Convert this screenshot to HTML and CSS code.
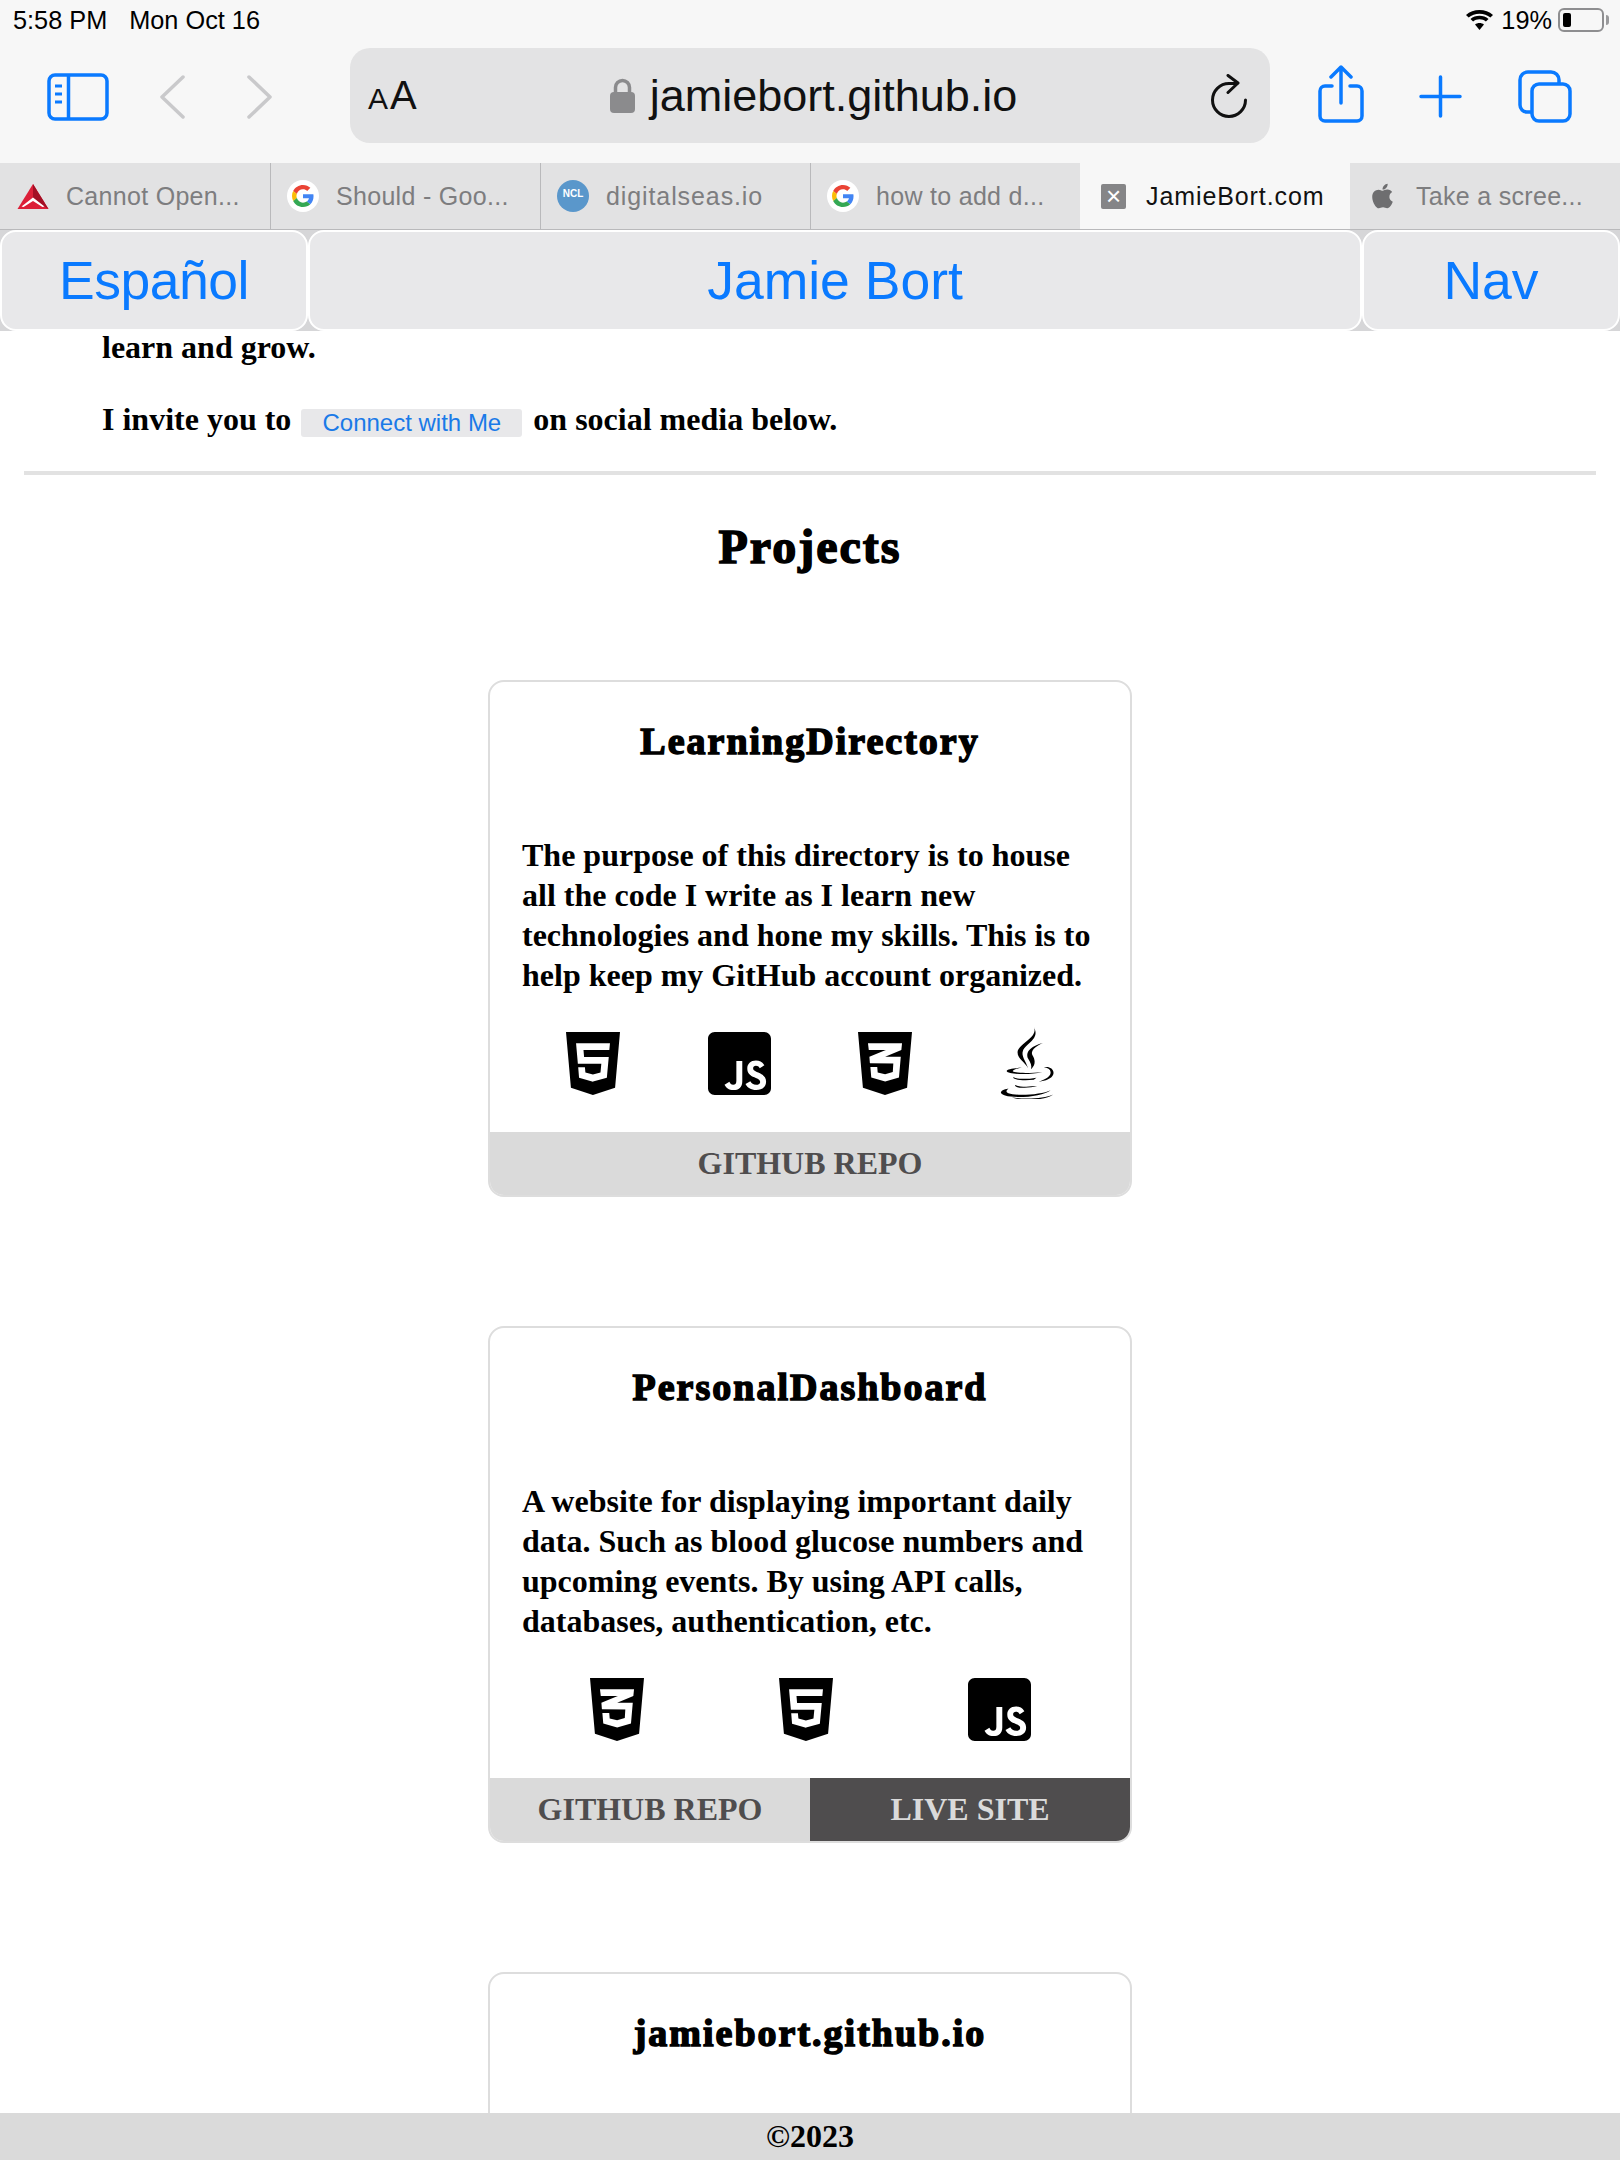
FILE: index.html
```html
<!DOCTYPE html>
<html lang="en">
<head>
    <meta charset="UTF-8">
    <title>JamieBort.com</title>
    <link rel="stylesheet" href="styles.css">
</head>
<body>
    <svg class="icon-defs" width="0" height="0" aria-hidden="true">
        <defs>
            <symbol id="i-html" viewBox="0 32 384 448"><path fill-rule="evenodd" d="M0 32l34.9 395.8L191.5 480l157.6-52.2L384 32H0zm308.2 127.9H124.4l4.1 49.4h175.6l-13.6 148.4-97.9 27v.3h-1.1l-98.7-27.3-6-75.8h47.7L138 320l53.5 14.5 53.7-14.5 6-62.2H84.3L71.5 112.2h241.1l-4.4 47.7z"/></symbol>
            <symbol id="i-css" viewBox="0 32 384 448"><path fill-rule="evenodd" d="M0 32l34.9 395.8L192 480l157.1-52.2L384 32H0zm313.1 80l-4.8 47.3L193 208.6l-.3.1h111.5l-12.8 146.6-98.2 28.7-98.8-29.2-6.4-73.9h48.9l3.2 38.3 52.6 13.3 54.7-15.4 3.7-61.6-166.3-.5v-.1l-.2.1-3.6-46.3L193.1 162l6.5-2.7H76.7L70.9 112h242.2z"/></symbol>
            <symbol id="i-js" viewBox="0 32 448 448"><path fill-rule="evenodd" d="M400 32H48C21.5 32 0 53.5 0 80v352c0 26.5 21.5 48 48 48h352c26.5 0 48-21.5 48-48V80c0-26.5-21.5-48-48-48zM243.8 381.4c0 43.6-25.6 63.5-62.9 63.5-33.7 0-53.2-17.4-63.2-38.5l34.3-20.7c6.6 11.7 12.6 21.6 27.1 21.6 13.8 0 22.6-5.4 22.6-26.5V237.7h42.1v143.7zm99.6 63.5c-39.1 0-64.4-18.6-76.7-43l34.3-19.8c9 14.7 20.8 25.6 41.5 25.6 17.4 0 28.6-8.7 28.6-20.8 0-14.4-11.4-19.5-30.7-28l-10.5-4.5c-30.4-12.9-50.5-29.2-50.5-63.5 0-31.6 24.1-55.6 61.6-55.6 26.8 0 46 9.3 59.8 33.7L368 290c-7.2-12.9-15-18-27.1-18-12.3 0-20.1 7.8-20.1 18 0 12.6 7.8 17.7 25.9 25.6l10.5 4.5c35.8 15.3 55.9 31 55.9 66.2 0 37.8-29.8 58.6-69.7 58.6z"/></symbol>
            <symbol id="i-google" viewBox="0 0 48 48">
                <path fill="#EA4335" d="M24 9.5c3.54 0 6.71 1.22 9.21 3.6l6.85-6.85C35.9 2.38 30.47 0 24 0 14.62 0 6.51 5.38 2.56 13.22l7.98 6.19C12.43 13.72 17.74 9.5 24 9.5z"/>
                <path fill="#4285F4" d="M46.98 24.55c0-1.57-.15-3.09-.38-4.55H24v9.02h12.94c-.58 2.96-2.26 5.48-4.78 7.18l7.73 6c4.51-4.18 7.09-10.36 7.09-17.65z"/>
                <path fill="#FBBC05" d="M10.53 28.59c-.48-1.45-.76-2.99-.76-4.59s.27-3.14.76-4.59l-7.98-6.19C.92 16.46 0 20.12 0 24c0 3.88.92 7.54 2.56 10.78l7.97-6.19z"/>
                <path fill="#34A853" d="M24 48c6.48 0 11.93-2.13 15.89-5.81l-7.73-6c-2.15 1.45-4.92 2.3-8.16 2.3-6.26 0-11.57-4.22-13.47-9.91l-7.98 6.19C6.51 42.62 14.62 48 24 48z"/>
            </symbol>
        </defs>
    </svg>

    <header class="browser">
        <div class="status-bar">
            <div class="status-left">
                <span>5:58 PM</span>
                <span>Mon Oct 16</span>
            </div>
            <div class="status-right">
                <svg class="wifi" viewBox="2.300 .7 22.400 18.800" preserveAspectRatio="none"><path d="M13.5 4.2c3.4 0 6.6 1.3 9 3.6l2.2-2.5C21.700 2.400 17.700.7 13.500.7S5.300 2.400 2.300 5.300l2.200 2.500c2.400-2.300 5.600-3.600 9-3.600z"/><path d="M13.500 9.500c2 0 3.900.8 5.300 2.100l2.200-2.500c-2-1.900-4.700-3-7.500-3s-5.500 1.100-7.500 3l2.200 2.500c1.400-1.300 3.300-2.100 5.300-2.100z"/><path d="M13.500 19.500l3.700-5.100c-1-.9-2.300-1.400-3.700-1.400s-2.700.5-3.700 1.400z"/></svg>
                <span class="battery-text">19%</span>
                <div class="battery"><div class="battery-level"></div></div>
            </div>
        </div>

        <div class="toolbar">
            <svg class="sidebar-icon" viewBox="0 0 62 48" fill="none" stroke="#0a7aff" stroke-width="3.5"><rect x="2" y="2" width="58" height="44" rx="6"/><path d="M21.500 2v44"/><path d="M8 13h7M8 21h7M8 29h7" stroke-width="3"/></svg>
            <svg class="chevron chevron-back" viewBox="0 0 25 44" fill="none" stroke="#c9c9cb" stroke-width="3.500" stroke-linecap="round" stroke-linejoin="round"><path d="M23 2L2 22l21 20"/></svg>
            <svg class="chevron chevron-forward" viewBox="0 0 25 44" fill="none" stroke="#c9c9cb" stroke-width="3.500" stroke-linecap="round" stroke-linejoin="round"><path d="M2 2l21 20L2 42"/></svg>

            <div class="address-bar">
                <span class="reader"><span class="reader-small">A</span>A</span>
                <div class="address">
                    <svg class="lock" viewBox="0 0 25 35"><path fill="none" stroke="#8b8b8d" stroke-width="3.500" d="M5.500 16V9.500a7 7 0 0 1 14 0V16"/><rect x="0" y="14" width="25" height="21" rx="4" fill="#8b8b8d"/></svg>
                    <span>jamiebort.github.io</span>
                </div>
                <svg class="reload" viewBox="0 0 37 44" fill="none" stroke="#111" stroke-width="3" stroke-linecap="round" stroke-linejoin="round"><path d="M35.500 26A16.500 16.500 0 1 1 19 9.500h8"/><path d="M18 1.500L28 9l-10 9.500"/></svg>
            </div>

            <div class="toolbar-actions">
                <svg class="share" viewBox="0 0 46 58" fill="none" stroke="#0a7aff" stroke-width="3.500" stroke-linecap="round" stroke-linejoin="round"><path d="M14 21H7a5 5 0 0 0-5 5v25a5 5 0 0 0 5 5h32a5 5 0 0 0 5-5V26a5 5 0 0 0-5-5h-7"/><path d="M23 38V3M13 12l10-10 10 10"/></svg>
                <svg class="plus" viewBox="0 0 43 43" fill="none" stroke="#0a7aff" stroke-width="3.500" stroke-linecap="round"><path d="M21.500 2v39M2 21.500h39"/></svg>
                <svg class="tabs-icon" viewBox="0 0 54 53" fill="none" stroke="#0a7aff" stroke-width="3.500" stroke-linejoin="round"><rect x="14" y="14" width="38" height="37" rx="7"/><path d="M41 14v-4a8 8 0 0 0-8-8H10a8 8 0 0 0-8 8v25a7 7 0 0 0 7 7h5"/></svg>
            </div>
        </div>

        <div class="tabs">
            <div class="tab">
                <svg class="favicon" viewBox="0 0 31 25"><path fill="#dc1f38" d="M15.500 0L31 25H0z"/><path fill="#a30f25" d="M15.500 0L31 25l-15.500-9z"/><path fill="#fff" d="M15.500 13.500L27 22.500l-2 .5-9.500-6-9.500 6-2-.5z"/></svg>
                <span>Cannot Open...</span>
            </div>
            <div class="tab tab-split">
                <span class="favicon-google"><svg viewBox="0 0 48 48"><use href="#i-google"/></svg></span>
                <span>Should - Goo...</span>
            </div>
            <div class="tab tab-split tab-full">
                <span class="favicon-ncl">NCL</span>
                <span>digitalseas.io</span>
            </div>
            <div class="tab tab-split">
                <span class="favicon-google"><svg viewBox="0 0 48 48"><use href="#i-google"/></svg></span>
                <span>how to add d...</span>
            </div>
            <div class="tab tab-active tab-full">
                <span class="favicon-x">×</span>
                <span>JamieBort.com</span>
            </div>
            <div class="tab">
                <svg class="favicon-apple" viewBox="0 0 384 512"><path fill="#6e6e70" d="M318.700 268.700c-.2-36.700 16.400-64.400 50-84.800-18.800-26.900-47.200-41.700-84.700-44.600-35.500-2.800-74.300 20.700-88.500 20.700-15 0-49.400-19.700-76.400-19.700C63.300 141.200 4 184.800 4 273.500q0 39.300 14.400 81.200c12.800 36.700 59 126.700 107.200 125.200 25.200-.6 43-17.900 75.800-17.900 31.800 0 48.300 17.900 76.400 17.900 48.600-.7 90.400-82.500 102.600-119.300-65.200-30.700-61.700-90-61.700-91.900zm-56.600-164.200c27.300-32.400 24.800-61.900 24-72.500-24.100 1.400-52 16.400-67.900 34.900-17.500 19.800-27.800 44.300-25.600 71.900 26.100 2 49.900-11.400 69.500-34.300z"/></svg>
                <span>Take a scree...</span>
            </div>
        </div>
    </header>

    <nav class="site-nav">
        <a class="nav-lang" href="#">Español</a>
        <a href="#">Jamie Bort</a>
        <a href="#">Nav</a>
    </nav>

    <main class="content">
        <p class="intro">learn and grow.</p>
        <p class="intro invite">I invite you to <a class="connect" href="#">Connect with Me</a> on social media below.</p>
        <hr>
        <h1>Projects</h1>

        <section class="card">
            <h2>LearningDirectory</h2>
            <p>The purpose of this directory is to house all the code I write as I learn new technologies and hone my skills. This is to help keep my GitHub account organized.</p>
            <div class="tech">
                <svg class="tech-shield"><use href="#i-html"/></svg>
                <svg class="tech-js"><use href="#i-js"/></svg>
                <svg class="tech-shield"><use href="#i-css"/></svg>
                <svg class="tech-java" viewBox="60 35 160 213">
                    <path d="M160 35C176 65 113 85 112 110C112 130 135 140 143 157C137 135 122 122 128 105C135 85 181 70 160 35Z"/>
                    <path d="M187 82C158 90 132 105 144 130C150 140 155 150 152 160C168 145 163 130 157 120C148 105 165 92 187 82Z"/>
                    <path d="M125 155C100 157 78 160 80 166C83 175 150 178 185 168C150 172 105 172 98 166C96 162 110 158 125 155Z"/>
                    <path d="M190 155C205 150 222 160 218 175C214 188 195 195 175 197C195 190 210 182 210 170C210 160 200 155 190 155Z"/>
                    <path d="M100 183C95 190 125 195 160 191L168 185C140 190 108 190 100 183Z"/>
                    <path d="M105 207C100 216 145 218 170 210C145 212 118 213 105 207Z"/>
                    <path d="M85 217C60 222 55 232 75 238C110 248 190 240 210 222C185 235 110 240 85 231C75 226 80 222 85 217Z"/>
                    <path d="M95 243C130 250 190 248 218 235C195 252 125 256 95 243Z"/>
                </svg>
            </div>
            <div class="card-links">
                <a href="#">GITHUB REPO</a>
            </div>
        </section>

        <section class="card">
            <h2>PersonalDashboard</h2>
            <p>A website for displaying important daily data. Such as blood glucose numbers and upcoming events. By using API calls, databases, authentication, etc.</p>
            <div class="tech">
                <svg class="tech-shield"><use href="#i-css"/></svg>
                <svg class="tech-shield"><use href="#i-html"/></svg>
                <svg class="tech-js"><use href="#i-js"/></svg>
            </div>
            <div class="card-links">
                <a href="#">GITHUB REPO</a>
                <a class="live" href="#">LIVE SITE</a>
            </div>
        </section>

        <section class="card card-cut">
            <h2>jamiebort.github.io</h2>
        </section>
    </main>

    <footer class="site-footer">©2023</footer>
</body>
</html>
```

FILE: styles.css
```css
html, body {
    height: 100%;
}

body {
    margin: 0;
    height: 2160px;
    overflow: hidden;
    display: flex;
    flex-direction: column;
    background-color: #fff;
    font-family: "Liberation Serif", serif;
    color: #000;
}

.icon-defs {
    position: absolute;
}

/* browser chrome */
.browser {
    background-color: #f7f7f7;
    font-family: "Liberation Sans", Arial, sans-serif;
}

.status-bar {
    height: 40px;
    display: flex;
    justify-content: space-between;
    padding: 0 16px 0 13px;
    font-size: 25.300px;
    align-items: center;
}

.status-left {
    display: flex;
    gap: 22px;
}

.status-right {
    display: flex;
    align-items: center;
}

.wifi {
    width: 27px;
    height: 20px;
}

.battery-text {
    margin: 0 6px 0 8px;
}

.battery {
    width: 46px;
    height: 24px;
    box-sizing: border-box;
    border: 2px solid #8e8e90;
    border-radius: 6px;
    padding: 3px;
    position: relative;
}

.battery::after {
    content: "";
    position: absolute;
    right: -7px;
    top: 5px;
    width: 3px;
    height: 10px;
    background-color: #9a9a9c;
    border-radius: 0 3px 3px 0;
}

.battery-level {
    width: 8px;
    height: 100%;
    background-color: #000;
    border-radius: 2px;
}

.toolbar {
    height: 123px;
    display: flex;
    align-items: flex-start;
    position: relative;
}

.sidebar-icon {
    width: 62px;
    height: 48px;
    margin: 33px 0 0 47px;
}

.chevron {
    width: 25px;
    height: 44px;
    margin-top: 35px;
}

.chevron-back {
    margin-left: 51px;
}

.chevron-forward {
    margin-left: 62px;
}

.address-bar {
    width: 920px;
    height: 95px;
    margin: 8px 0 0 78px;
    box-sizing: border-box;
    background-color: #e3e3e4;
    border-radius: 20px;
    display: flex;
    align-items: center;
    justify-content: space-between;
    padding: 0 23px 0 18px;
}

.reader {
    font-size: 40px;
    width: 48px;
    white-space: nowrap;
    color: #111;
}

.reader-small {
    font-size: 30px;
    margin-right: 2px;
}

.address {
    display: flex;
    align-items: center;
    gap: 15px;
    font-size: 45px;
    color: #111;
    margin-left: 1px;
}

.lock {
    width: 25px;
    height: 35px;
}

.reload {
    width: 37px;
    height: 44px;
}

.toolbar-actions {
    display: flex;
    align-items: flex-start;
}

.share {
    width: 46px;
    height: 58px;
    margin: 25px 0 0 48px;
}

.plus {
    width: 43px;
    height: 43px;
    margin: 35px 0 0 55px;
}

.tabs-icon {
    width: 54px;
    height: 53px;
    margin: 30px 0 0 56px;
}

.tabs {
    display: grid;
    grid-template-columns: repeat(6, 1fr);
    height: 67px;
    background-color: #e2e2e3;
    border-bottom: 1px solid #b9b9bb;
    box-sizing: border-box;
}

.tab {
    display: flex;
    align-items: center;
    gap: 17px;
    padding-left: 16px;
    border-left: 1px solid transparent;
    font-size: 25px;
    letter-spacing: 0.3px;
    color: #7d7d7f;
    white-space: nowrap;
    overflow: hidden;
}

.tab-split {
    border-left-color: #b9b9bb;
}

.tab-full {
    letter-spacing: 0.9px;
}

.tab-active {
    background-color: #f7f7f7;
    color: #111;
}

.favicon {
    width: 32px;
    height: 25px;
}

.favicon-google {
    width: 32px;
    height: 32px;
    flex: none;
    background-color: #fff;
    border-radius: 50%;
    display: flex;
    align-items: center;
    justify-content: center;
}

.favicon-google svg {
    width: 22px;
    height: 22px;
}

.favicon-ncl {
    width: 32px;
    height: 32px;
    flex: none;
    border-radius: 50%;
    background-color: #5a97cb;
    color: #fff;
    font-size: 10px;
    font-weight: bold;
    letter-spacing: 0;
    text-align: center;
    line-height: 28px;
}

.favicon-x {
    width: 25px;
    height: 25px;
    margin: 0 3px 0 4px;
    flex: none;
    border-radius: 2px;
    background-color: #858587;
    color: #fff;
    font-size: 26px;
    letter-spacing: 0;
    text-align: center;
    line-height: 25px;
}

.favicon-apple {
    width: 21px;
    height: 28px;
    margin: 0 6px 0 5px;
}

/* page nav */
.site-nav {
    display: grid;
    grid-template-columns: 308px 1fr 258px;
    height: 101px;
    background-color: #d6d6d8;
    font-family: "Liberation Sans", Arial, sans-serif;
}

.site-nav a {
    display: flex;
    align-items: center;
    justify-content: center;
    box-sizing: border-box;
    background-color: #e8e8ea;
    border: 2px solid #fff;
    border-radius: 16px;
    color: #0a7aff;
    font-size: 53.500px;
    text-decoration: none;
}

.site-nav a.nav-lang {
    letter-spacing: -0.5px;
}

/* page content */
.content {
    flex: 1;
    min-height: 0;
    font-weight: bold;
}

.intro {
    margin: 0 0 38px 102px;
    font-size: 32px;
    line-height: 32px;
}

.invite {
    line-height: 36px;
    margin-bottom: 34px;
}

.connect {
    display: inline-block;
    width: 221px;
    height: 28px;
    margin: 0 3px 0 2px;
    background-color: #e8e8ea;
    border-radius: 3px;
    color: #1a7ae8;
    font-family: "Liberation Sans", Arial, sans-serif;
    font-size: 24px;
    font-weight: normal;
    line-height: 28px;
    text-align: center;
    text-decoration: none;
    vertical-align: -1px;
}

hr {
    margin: 0 24px;
    border: none;
    border-top: 4px solid #e2e2e2;
}

h1, .card h2 {
    letter-spacing: 2px;
    -webkit-text-stroke: 1.5px #000;
}

h1 {
    margin: 45px 0 0;
    font-size: 48px;
    line-height: 54px;
    text-align: center;
}

.card {
    width: 644px;
    box-sizing: border-box;
    margin: 106px auto 0;
    border: 2px solid #ddd;
    border-radius: 16px;
    overflow: hidden;
}

.card + .card {
    margin-top: 129px;
}

.card-cut {
    min-height: 170px;
}

.card h2 {
    margin: 38px 0 0;
    font-size: 38px;
    line-height: 42px;
    text-align: center;
}

.card p {
    margin: 73px 32px 0;
    font-size: 32px;
    line-height: 40px;
}

.tech {
    display: flex;
    justify-content: space-around;
    align-items: center;
    margin: 32px 32px 0;
    height: 72px;
    padding-bottom: 33px;
}

.tech-shield {
    width: 54px;
    height: 63px;
}

.tech-js {
    width: 63px;
    height: 63px;
}

.tech-java {
    width: 54px;
    height: 72px;
}

.card-links {
    display: flex;
}

.card-links a {
    flex: 1;
    height: 63px;
    background-color: #dadada;
    color: #4f4d4e;
    font-size: 32px;
    line-height: 63px;
    text-align: center;
    text-decoration: none;
}

.card-links a.live {
    background-color: #4f4d4e;
    color: #dadada;
}

.site-footer {
    position: relative;
    height: 47px;
    background-color: #dadada;
    font-size: 32px;
    font-weight: bold;
    line-height: 47px;
    text-align: center;
}
```
